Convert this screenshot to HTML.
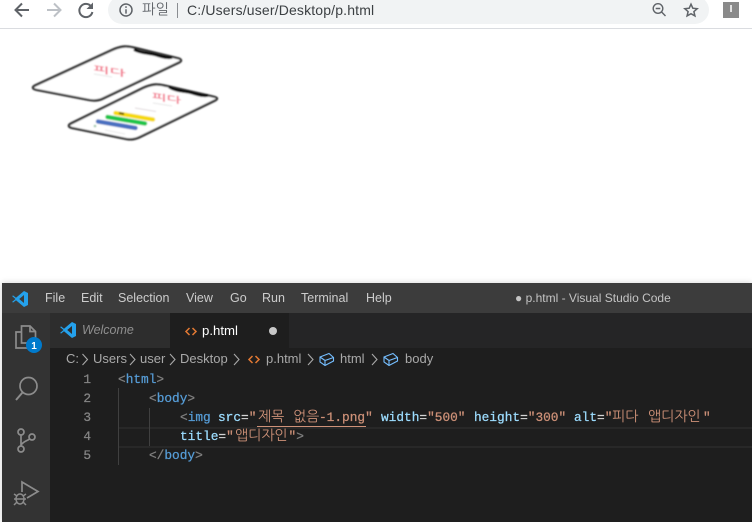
<!DOCTYPE html>
<html lang="ko">
<head>
<meta charset="utf-8">
<style>
html,body{margin:0;padding:0;background:#fff;}
#r{position:relative;width:752px;height:522px;overflow:hidden;background:#fff;font-family:"Liberation Sans","NanumGothic",sans-serif;}
#r div,#r span.a{position:absolute;white-space:pre;}
.m{font-size:12.5px;color:#ccc;top:291px;line-height:15px;}
.b{font-size:13px;color:#a9a9a9;top:351px;line-height:16px;}
.c{font-family:"Liberation Mono","NanumGothic",monospace;font-size:12.8px;line-height:19px;white-space:pre;-webkit-text-stroke:.25px currentColor;}
.n{color:#858585;width:20px;text-align:right;left:71px;}
.t{color:#569cd6}.g{color:#808080}.at{color:#9cdcfe}.s{color:#ce9178}.w{color:#d4d4d4}
.k{font-family:"NanumGothic","Liberation Mono",monospace;font-size:14px;color:#ce9178;}
svg{position:absolute;left:0;top:0;}
</style>
</head>
<body>
<div id="r">
<div style="left:0;top:28px;width:752px;height:1px;background:#dadce0"></div>
<div style="left:108px;top:-4px;width:601px;height:28px;border-radius:14px;background:#f1f3f4"></div>
<div style="left:142px;top:2px;font-size:14.3px;line-height:16px;color:#5f6368">파일</div>
<div style="left:177px;top:3px;width:1px;height:15px;background:#8a8d91"></div>
<div style="left:187px;top:2px;font-size:14px;letter-spacing:.16px;line-height:16px;color:#3c4043">C:/Users/user/Desktop/p.html</div>
<div style="left:723px;top:2px;width:16px;height:16px;background:#8a8a8a;color:#fff;font-size:10px;font-weight:bold;line-height:16px;text-align:center">I</div>

<div style="left:2px;top:283px;width:750px;height:239px;background:#1e1e1e;box-shadow:0 0 6px rgba(0,0,0,.18)"></div>
<div style="left:2px;top:283px;width:750px;height:30px;background:#3c3c3c"></div>
<div style="left:2px;top:313px;width:48px;height:209px;background:#333"></div>
<div style="left:50px;top:313px;width:702px;height:35px;background:#252526"></div>
<div style="left:50px;top:313px;width:120px;height:35px;background:#2d2d2d"></div>
<div style="left:170px;top:313px;width:119px;height:35px;background:#1e1e1e"></div>

<div class="m" style="left:45px">File</div>
<div class="m" style="left:81px">Edit</div>
<div class="m" style="left:118px">Selection</div>
<div class="m" style="left:186px">View</div>
<div class="m" style="left:230px">Go</div>
<div class="m" style="left:262px">Run</div>
<div class="m" style="left:301px">Terminal</div>
<div class="m" style="left:366px">Help</div>
<div class="m" style="left:515px;font-size:12px;color:#c4c4c4">● p.html - Visual Studio Code</div>

<div style="left:82px;top:323px;font-size:12.5px;line-height:15px;font-style:italic;color:#8f8f8f">Welcome</div>
<div style="left:202px;top:323px;font-size:13.2px;line-height:16px;color:#fff">p.html</div>

<div class="b" style="left:66px">C:</div>
<div class="b" style="left:93px">Users</div>
<div class="b" style="left:140px">user</div>
<div class="b" style="left:180px">Desktop</div>
<div class="b" style="left:266px">p.html</div>
<div class="b" style="left:340px">html</div>
<div class="b" style="left:405px">body</div>

<!-- current line + guides -->
<div style="left:119px;top:427px;width:633px;height:17px;border-top:2px solid #282828;border-bottom:2px solid #282828"></div>
<div style="left:118px;top:388px;width:1px;height:77px;background:#404040"></div>
<div style="left:149px;top:408px;width:1px;height:38px;background:#404040"></div>
<div style="left:257px;top:426px;width:109px;height:1px;background:#ce9178"></div>

<div class="c n" style="top:370px">1</div>
<div class="c n" style="top:389px">2</div>
<div class="c n" style="top:408px">3</div>
<div class="c n" style="top:427px">4</div>
<div class="c n" style="top:446px">5</div>

<div class="c" style="left:118px;top:370px"><span class="g">&lt;</span><span class="t">html</span><span class="g">&gt;</span></div>
<div class="c" style="left:149px;top:389px"><span class="g">&lt;</span><span class="t">body</span><span class="g">&gt;</span></div>
<div class="c" style="left:180px;top:408px"><span class="g">&lt;</span><span class="t">img</span></div>
<div class="c at" style="left:218px;top:408px">src<span class="w">=</span><span class="s">"</span></div>
<div class="k" style="left:258px;top:408px;line-height:19px">제목</div>
<div class="k" style="left:293px;top:408px;line-height:19px">없음</div>
<div class="c s" style="left:319px;top:408px">-1.png"</div>
<div class="c at" style="left:381px;top:408px">width<span class="w">=</span><span class="s">"500"</span></div>
<div class="c at" style="left:474px;top:408px">height<span class="w">=</span><span class="s">"300"</span></div>
<div class="c at" style="left:574px;top:408px">alt<span class="w">=</span><span class="s">"</span></div>
<div class="k" style="left:612px;top:408px;line-height:19px">피다</div>
<div class="k" style="left:648px;top:408px;line-height:19px">앱디자인</div>
<div class="c s" style="left:703px;top:408px">"</div>
<div class="c at" style="left:180px;top:427px">title<span class="w">=</span><span class="s">"</span></div>
<div class="k" style="left:235px;top:427px;line-height:19px">앱디자인</div>
<div class="c" style="left:288.5px;top:427px"><span class="s">"</span><span class="g">&gt;</span></div>
<div class="c" style="left:149px;top:446px"><span class="g">&lt;/</span><span class="t">body</span><span class="g">&gt;</span></div>

<svg width="752" height="522" viewBox="0 0 752 522" fill="none">
<defs><filter id="bl" x="-10%" y="-10%" width="120%" height="120%"><feGaussianBlur stdDeviation="0.7"/></filter></defs>
<!-- chrome icons -->
<path d="M29 10H16M22 3.5L15.5 10L22 16.5" stroke="#5f6368" stroke-width="2"/>
<path d="M47 10H60M54 3.5L60.5 10L54 16.5" stroke="#bdc1c6" stroke-width="2"/>
<path d="M91.2 6.5A6.6 6.6 0 1 0 92.4 12" stroke="#5f6368" stroke-width="2"/>
<path d="M93 2.5V9H86.5Z" fill="#5f6368"/>
<circle cx="126" cy="10" r="6" stroke="#5f6368" stroke-width="1.5"/>
<path d="M126 9.2V13.6M126 6.2V7.9" stroke="#5f6368" stroke-width="1.5"/>
<circle cx="658" cy="8.5" r="4.8" stroke="#5f6368" stroke-width="1.4"/>
<path d="M655.7 8.5H660.3M661.6 12L665.5 16" stroke="#5f6368" stroke-width="1.4"/>
<path d="M691 4.2L692.8 8.2L697.2 8.7L693.9 11.6L694.9 15.9L691 13.7L687.1 15.9L688.1 11.6L684.8 8.7L689.2 8.2Z" stroke="#5f6368" stroke-width="1.5"/>

<!-- phones -->
<g filter="url(#bl)">
<path d="M124 46.5C128 46 131 47 136 48L177 58C182 59 182 61 179 62.5L103 98.5C98 101 94 101 89 100L37 90C32 89 32 87 35 85.5L112 50C116 48 120 47 124 46.5Z" stroke="#333" stroke-width="2.4" fill="#fff"/>
<path d="M134 49.5C140 53 148 53 154 54.5C160 56 166 58.5 172 57.5" stroke="#000" stroke-width="2.8"/>
<path d="M155 84.5C159 84 162 85 167 86L213 96.5C218 97.5 218 99 215 100.5L140 137C135 139.5 131 140 126 139L72 128C68 127 68 125 71 123.5L143 88C147 86 151 85 155 84.5Z" stroke="#333" stroke-width="2.4" fill="#fff"/>
<path d="M169 87C175 91 183 91 190 92.5C196 94 202 96.5 208 95.5" stroke="#000" stroke-width="2.8"/>
<path d="M115.5 113L153 119.5" stroke="#f5d90a" stroke-width="4.4" stroke-linecap="round"/>
<path d="M107.5 117L145 123.5" stroke="#1fc54a" stroke-width="4.4" stroke-linecap="round"/>
<path d="M98 121.5L135.5 128" stroke="#4a6fc0" stroke-width="4.4" stroke-linecap="round"/>
<path d="M119 113L124 114" stroke="#6b5a10" stroke-width="2"/>
<path d="M135 108L156 111.5" stroke="#e0d8dc" stroke-width="1"/>
<path d="M105 130L125 134" stroke="#e8e8e8" stroke-width="1"/>
<path d="M94 74L112 77M153 103L172 106" stroke="#e6e6e6" stroke-width="1"/>
<circle cx="95" cy="126" r="1.3" fill="#9fc7a9"/>
<g font-family="'NanumGothic','Noto Sans CJK KR',sans-serif" font-weight="bold" fill="#f2788c" font-size="10">
<text transform="translate(93.5,71.5) skewY(9) scale(1.7,.85)">피다</text>
<text transform="translate(152,99) skewY(9) scale(1.55,.85)">피다</text>
</g>
</g>

<!-- vscode logo -->
<path fill-rule="evenodd" fill="#24a1ec" d="M24 291L28 293V305L24 307L16 300.3L13.2 302.5L12 302L15.5 299L12 296L13.2 295.5L16 297.7ZM24 295L19.2 299L24 303Z"/>
<path fill-rule="evenodd" fill="#24a1ec" d="M72 322L76 324V336L72 338L64 331.3L61.2 333.5L60 333L63.5 330L60 327L61.2 326.5L64 328.7ZM72 326L67.2 330L72 334Z"/>

<!-- html icons -->
<path d="M189.5 328L186 331.5L189.5 335M192.5 328L196 331.5L192.5 335" stroke="#e37933" stroke-width="1.5"/>
<path d="M252.5 356L249 359.5L252.5 363M255.5 356L259 359.5L255.5 363" stroke="#e37933" stroke-width="1.5"/>
<circle cx="273" cy="331" r="4" fill="#c8c8c8"/>

<!-- breadcrumb chevrons -->
<g stroke="#a9a9a9" stroke-width="1.1">
<path d="M82.5 354L87.5 359.5L82.5 365"/>
<path d="M130 354L135 359.5L130 365"/>
<path d="M170 354L175 359.5L170 365"/>
<path d="M234 354L239 359.5L234 365"/>
<path d="M308 354L313 359.5L308 365"/>
<path d="M372 354L377 359.5L372 365"/>
</g>
<!-- cube icons -->
<g stroke="#75beff" stroke-width="1.1">
<path d="M320 357L329 353.5L333.5 357.5L333.5 361L325 365.5L320 362Z"/>
<path d="M320 357L325 360.5L333.5 357.5M325 360.5V365.5"/>
<path d="M384 357L393 353.5L397.5 357.5L397.5 361L389 365.5L384 362Z"/>
<path d="M384 357L389 360.5L397.5 357.5M389 360.5V365.5"/>
</g>

<!-- activity icons -->
<g stroke="#8c8c8c" stroke-width="1.7">
<path d="M21.5 332H16V348H28V343"/>
<path d="M21.5 326V343H35.5V331.5L30 326Z"/>
<path d="M30 326V331.5H35.5"/>
<circle cx="28.5" cy="386" r="8.5"/>
<path d="M22.5 392.5L16 400" stroke-width="2"/>
<circle cx="21" cy="432" r="3"/>
<circle cx="32" cy="437" r="3"/>
<circle cx="21" cy="449" r="3"/>
<path d="M21 435V446M29.5 439C27 441 24 441 21 445"/>
<path d="M22 492V482L38 491.5L27 498"/>
</g>
<circle cx="34" cy="345" r="8" fill="#007acc"/>
<text x="34" y="349" font-family="'Liberation Sans',sans-serif" font-size="10" font-weight="bold" fill="#fff" text-anchor="middle">1</text>
<g stroke="#8c8c8c" stroke-width="1.5">
<ellipse cx="20" cy="499" rx="4" ry="5"/>
<path d="M16 499H24M14 494L17 496M26 494L23 496M14 499H16M24 499H26M14 505L17 502M26 505L23 502"/>
</g>
</svg>
</div>
</body>
</html>
